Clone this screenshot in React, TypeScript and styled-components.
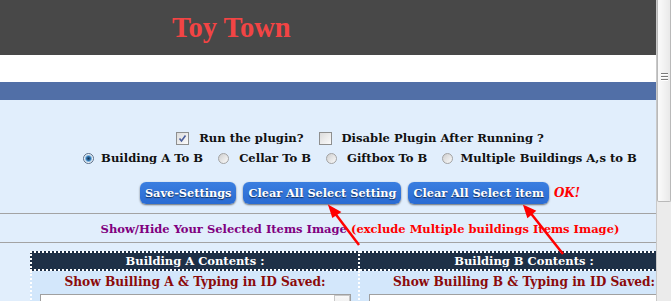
import React from 'react';
import styled, { createGlobalStyle } from 'styled-components';

const GlobalStyle = createGlobalStyle`
  html, body {
    margin: 0;
    padding: 0;
    overflow: hidden;
    background: #ffffff;
  }
  body {
    font-family: "DejaVu Serif", "Liberation Serif", serif;
  }
`;

const Window = styled.div`
  display: flex;
  height: 301px;
`;

const Viewport = styled.div`
  flex: 1;
  min-width: 0;
  overflow: hidden;
`;

const Page = styled.div`
  position: relative;
  width: 720px;
`;

const TopBar = styled.header`
  height: 55px;
  background: #484848;
  display: flex;
  align-items: center;
  padding-left: 172px;
`;

const Title = styled.h1`
  margin: 0;
  font: bold 28.5px "Liberation Serif", serif;
  color: #f24444;
`;

const WhiteBand = styled.div`
  height: 27px;
  background: #ffffff;
`;

const NavBar = styled.div`
  height: 18px;
  background: #516fa7;
`;

const Panel = styled.section`
  background: #e1eefc;
  padding-top: 30px;
  height: 201px;
`;

const OptionRow = styled.div<{ $top?: number }>`
  display: flex;
  justify-content: center;
  align-items: center;
  gap: 15px;
  height: 16px;
  margin-top: ${(p) => p.$top ?? 0}px;
`;

const Option = styled.label<{ $gap: number }>`
  display: flex;
  align-items: center;
  gap: ${(p) => p.$gap}px;
  font-weight: bold;
  font-size: 11.6px;
  color: #111;
  white-space: nowrap;
`;

const CheckBox = styled.span`
  width: 11px;
  height: 11px;
  border: 1px solid #8e8f8f;
  background: linear-gradient(135deg, #dcdcdc, #fbfbfb);
  display: flex;
  align-items: center;
  justify-content: center;
`;

const Radio = styled.span<{ $on?: boolean }>`
  width: 11px;
  height: 11px;
  border-radius: 50%;
  border: 1px solid ${(p) => (p.$on ? '#5a6f8a' : '#a3a3a3')};
  background: ${(p) =>
    p.$on
      ? 'radial-gradient(circle at 50% 50%, #16304e 0, #2c6fa8 2px, #7fb4e0 3px, #eef2f6 4px)'
      : 'linear-gradient(135deg, #cfcfcf, #fafafa)'};
  box-sizing: border-box;
`;

const ButtonRow = styled.div`
  display: flex;
  justify-content: center;
  align-items: center;
  gap: 7px;
  margin-top: 16px;
  height: 22px;
`;

const Button = styled.button`
  height: 22px;
  padding: 0 5px;
  border: none;
  border-radius: 6px;
  background: linear-gradient(#3a7ee0, #2a6bd2);
  box-shadow: 0 1px 2px rgba(0, 0, 0, 0.55);
  color: #ffffff;
  font: bold 11.3px "DejaVu Serif", serif;
  text-shadow: 0 1px 1px rgba(0, 0, 0, 0.6);
  white-space: nowrap;
`;

const Ok = styled.span`
  color: #ff0000;
  font: italic bold 12px "DejaVu Serif", serif;
  margin-left: -2px;
`;

const Rule = styled.hr<{ $top?: number }>`
  margin: ${(p) => p.$top ?? 0}px 0 0;
  border: none;
  border-top: 1px solid #a3a3a3;
`;

const NoticeRow = styled.div`
  height: 28px;
  display: flex;
  justify-content: center;
  align-items: center;
  padding-top: 2px;
  box-sizing: border-box;
  font-weight: bold;
  font-size: 11.5px;
  white-space: nowrap;
`;

const Tone = styled.span<{ $color: string }>`
  color: ${(p) => p.$color};
`;

const Table = styled.div`
  margin: 8px 0 0 30px;
  width: 660px;
  display: grid;
  grid-template-columns: 1fr 1fr;
`;

const HeadCell = styled.div<{ $first?: boolean }>`
  height: 16px;
  background: #1e3047;
  border: 2px dotted #ffffff;
  border-left-width: ${(p) => (p.$first ? 2 : 0)}px;
  color: #ffffff;
  font-weight: bold;
  font-size: 11.5px;
  display: flex;
  align-items: center;
  justify-content: center;
`;

const BodyCell = styled.div<{ $first?: boolean }>`
  background: #d3e7fb;
  border-right: 2px dotted #ffffff;
  border-left: ${(p) => (p.$first ? '2px dotted #ffffff' : 'none')};
  display: flex;
  flex-direction: column;
  align-items: center;
  padding-top: 4px;
  height: 60px;
`;

const CellHeading = styled.div`
  color: #8b0a0a;
  font-weight: bold;
  font-size: 12.2px;
  white-space: nowrap;
`;

const Field = styled.div`
  margin-top: 5px;
  width: 311px;
  height: 30px;
  box-sizing: border-box;
  border: 1px solid #a0a0a0;
  background: #ffffff;
  display: flex;
  justify-content: flex-end;
`;

const FieldScroll = styled.div`
  width: 16px;
  height: 16px;
  box-sizing: border-box;
  border: 1px solid #c8c8c8;
  background: linear-gradient(#f8f8f8, #e6e6e6);
`;

const Arrows = styled.svg`
  position: absolute;
  left: 0;
  top: 0;
  pointer-events: none;
`;

const ScrollBar = styled.div`
  width: 14px;
  background: #ebebeb;
  border-left: 1px solid #c9c9c9;
  display: flex;
  flex-direction: column;
`;

const Thumb = styled.div`
  height: 202px;
  box-sizing: border-box;
  border: 1px solid #b9b9b9;
  border-top: none;
  border-radius: 0 0 2px 2px;
  background: linear-gradient(90deg, #fbfbfb, #e9e9e9);
  display: flex;
  flex-direction: column;
  align-items: center;
  justify-content: center;
  gap: 2px;
  padding-bottom: 48px;
`;

const Grip = styled.span`
  width: 7px;
  height: 1px;
  background: #7a7a7a;
  box-shadow: 0 1px 0 #ffffff;
`;

const Check = () => (
  <svg width="9" height="9" viewBox="0 0 9 9">
    <path d="M1.5 4.5 L3.5 7 L7.5 1.5" fill="none" stroke="#4b5e9c" strokeWidth="1.6" />
  </svg>
);

const App = () => (
  <>
    <GlobalStyle />
    <Window>
      <Viewport>
        <Page>
          <TopBar>
            <Title>Toy Town</Title>
          </TopBar>
          <WhiteBand />
          <NavBar />
          <Panel>
            <OptionRow>
              <Option $gap={10}>
                <CheckBox>
                  <Check />
                </CheckBox>
                Run the plugin?
              </Option>
              <Option $gap={10}>
                <CheckBox />
                Disable Plugin After Running ?
              </Option>
            </OptionRow>
            <OptionRow $top={4}>
              <Option $gap={7}>
                <Radio $on />
                Building A To B
              </Option>
              <Option $gap={10}>
                <Radio />
                Cellar To B
              </Option>
              <Option $gap={10}>
                <Radio />
                Giftbox To B
              </Option>
              <Option $gap={7}>
                <Radio />
                Multiple Buildings A,s to B
              </Option>
            </OptionRow>
            <ButtonRow>
              <Button>Save-Settings</Button>
              <Button>Clear All Select Setting</Button>
              <Button>Clear All Select item</Button>
              <Ok>OK!</Ok>
            </ButtonRow>
            <Rule $top={9} />
            <NoticeRow>
              <Tone $color="#800080">Show/Hide Your Selected Items Image&nbsp;</Tone>
              <Tone $color="#ff0000">(exclude Multiple buildings Items Image)</Tone>
            </NoticeRow>
            <Rule />
            <Table>
              <HeadCell $first>Building A Contents :</HeadCell>
              <HeadCell>Building B Contents :</HeadCell>
              <BodyCell $first>
                <CellHeading>Show Builling A &amp; Typing in ID Saved:</CellHeading>
                <Field>
                  <FieldScroll />
                </Field>
              </BodyCell>
              <BodyCell>
                <CellHeading>Show Builling B &amp; Typing in ID Saved:</CellHeading>
                <Field />
              </BodyCell>
            </Table>
          </Panel>
          <Arrows width="720" height="301" viewBox="0 0 720 301">
            <g stroke="#ff0000" strokeWidth="2.5" fill="#ff0000">
              <line x1="359" y1="245" x2="334" y2="212" />
              <path d="M330 207 L339 212 L333 216 Z" />
              <line x1="563" y1="254" x2="529" y2="211" />
              <path d="M525 207 L534 211 L528 216 Z" />
            </g>
          </Arrows>
        </Page>
      </Viewport>
      <ScrollBar>
        <Thumb>
          <Grip />
          <Grip />
          <Grip />
        </Thumb>
      </ScrollBar>
    </Window>
  </>
);

export default App;
